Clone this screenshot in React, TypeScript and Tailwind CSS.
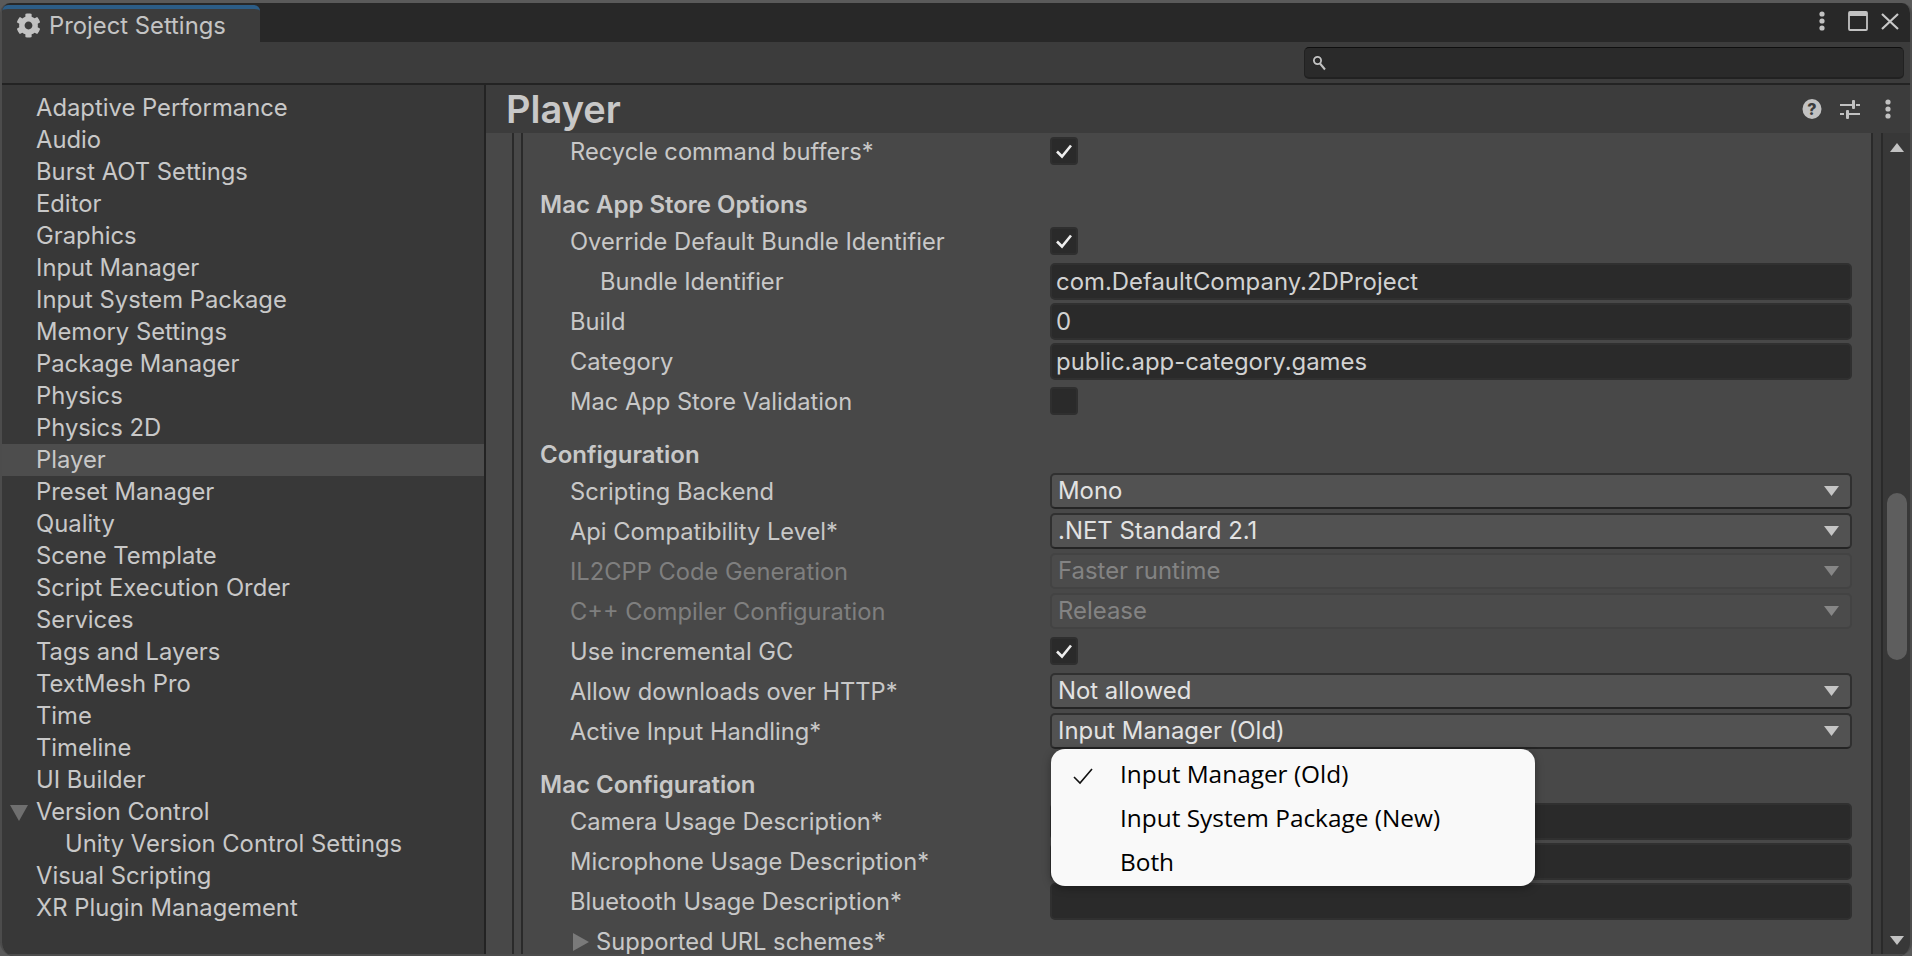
import { FaCog } from 'react-icons/fa';

const sidebarItems = [
  'Adaptive Performance',
  'Audio',
  'Burst AOT Settings',
  'Editor',
  'Graphics',
  'Input Manager',
  'Input System Package',
  'Memory Settings',
  'Package Manager',
  'Physics',
  'Physics 2D',
  'Player',
  'Preset Manager',
  'Quality',
  'Scene Template',
  'Script Execution Order',
  'Services',
  'Tags and Layers',
  'TextMesh Pro',
  'Time',
  'Timeline',
  'UI Builder',
  'Version Control',
  'Unity Version Control Settings',
  'Visual Scripting',
  'XR Plugin Management',
];

function Check() {
  return (
    <svg width="18" height="16" viewBox="0 0 18 16" fill="none">
      <path d="M2 8.5 L7 13.5 L16 2.5" stroke="#eeeeee" strokeWidth="2.6" />
    </svg>
  );
}

function Checkbox({ checked }: { checked?: boolean }) {
  return (
    <div className="-mt-[2px] flex h-[28px] w-[28px] items-center justify-center rounded-[4px] border-2 border-[#2f2f2f] bg-[#2a2a2a]">
      {checked && <Check />}
    </div>
  );
}

function Arrow({ disabled }: { disabled?: boolean }) {
  return (
    <svg width="15" height="10" viewBox="0 0 15 10" className="mr-[11px]">
      <path d="M0 0 H15 L7.5 10 Z" fill={disabled ? '#868686' : '#c4c4c4'} />
    </svg>
  );
}

function Row({ label, indent = 0, disabled, children }: { label: string; indent?: number; disabled?: boolean; children?: React.ReactNode }) {
  return (
    <div className="flex h-10 items-center">
      <div
        className={`w-[480px] shrink-0 text-[23.7px] ${indent === 1 ? 'pl-[30px]' : 'pl-0'} ${disabled ? 'text-[#7f7f7f]' : 'text-[#c8c8c8]'}`}
      >
        {label}
      </div>
      <div className="flex-1 text-[23.9px]">{children}</div>
    </div>
  );
}

function TextField({ value }: { value?: string }) {
  return (
    <div className="-mt-[2px] flex h-[37px] items-center rounded-[5px] border-2 border-[#303030] bg-[#2a2a2a] px-[4px] pt-[2px] text-[#d2d2d2]">
      {value}
    </div>
  );
}

function Select({ value, disabled }: { value: string; disabled?: boolean }) {
  return (
    <div
      className={`-mt-[2px] flex h-[36px] items-center justify-between rounded-[5px] border-2 pl-[6px] ${
        disabled
          ? 'border-[#434343] bg-[#4b4b4b] text-[#838383]'
          : 'border-[#303030] border-b-[#242424] bg-[#525252] text-[#e2e2e2]'
      }`}
    >
      <span>{value}</span>
      <Arrow disabled={disabled} />
    </div>
  );
}

function Header({ title }: { title: string }) {
  return <div className="mt-4 flex h-[34px] items-center text-[24px] font-semibold text-[#c8c8c8]">{title}</div>;
}

export default function App() {
  return (
    <div className="h-screen w-full overflow-hidden bg-[#5a5a5a] pt-[3px] font-['Inter',sans-serif] text-[23.8px]">
      <div className="relative flex h-full flex-col overflow-hidden rounded-t-[10px] rounded-b-[14px] border-x-2 border-[#4c4c4c]">
        {/* tab bar */}
        <div className="flex h-[39px] shrink-0 items-end bg-[#282828]">
          <div className="flex h-[37px] w-[258px] items-center gap-[8px] rounded-t-[6px] border-t-[4px] border-[#2c5d87] bg-[#3c3c3c] pl-[14px] text-[#c4c4c4]">
            <FaCog className="h-[25px] w-[25px] text-[#c2c2c2]" />
            <span>Project Settings</span>
          </div>
          <div className="ml-auto flex h-full items-center pb-[3px] pr-[11px]">
            <svg width="6" height="20" viewBox="0 0 6 20" fill="#c2c2c2">
              <circle cx="3" cy="3" r="2.6" />
              <circle cx="3" cy="10" r="2.6" />
              <circle cx="3" cy="17" r="2.6" />
            </svg>
            <svg width="20" height="20" viewBox="0 0 20 20" className="ml-[23px]">
              <rect x="1" y="1" width="18" height="18" fill="none" stroke="#c2c2c2" strokeWidth="1.8" rx="1" />
              <rect x="1" y="1" width="18" height="4" fill="#c2c2c2" />
            </svg>
            <svg width="18" height="17" viewBox="0 0 18 17" className="ml-[13px]">
              <path d="M1 1 L17 16 M17 1 L1 16" stroke="#c8c8c8" strokeWidth="2.2" />
            </svg>
          </div>
        </div>

        {/* search toolbar */}
        <div className="flex h-[43px] shrink-0 items-center justify-end border-b-2 border-[#232323] bg-[#3c3c3c] pr-[6px]">
          <div className="flex h-[32px] w-[600px] items-center rounded-[5px] border border-b-2 border-[#212121] border-t-[#0f0f0f] bg-[#2a2a2a] pl-[7px] pt-[2px]">
            <svg width="14" height="16" viewBox="0 0 14 16" fill="none" stroke="#c2c2c2">
              <circle cx="5.5" cy="5.5" r="3.6" strokeWidth="1.8" />
              <path d="M8 8.5 L13 14.5" strokeWidth="2" />
            </svg>
          </div>
        </div>

        <div className="flex min-h-0 flex-1">
          {/* sidebar */}
          <div className="w-[484px] shrink-0 border-r-2 border-[#232323] bg-[#383838] pt-[7px] text-[#c8c8c8]">
            {sidebarItems.map((item) => (
              <div
                key={item}
                className={`relative flex h-8 items-center ${item === 'Unity Version Control Settings' ? 'pl-[63px]' : 'pl-[34px]'} ${
                  item === 'Player' ? 'bg-[#4d4d4d]' : ''
                }`}
              >
                {item === 'Version Control' && (
                  <svg width="18" height="16" viewBox="0 0 18 16" className="absolute left-[8px] top-[9px]">
                    <path d="M0 0 H18 L9 16 Z" fill="#6f6f6f" />
                  </svg>
                )}
                {item}
              </div>
            ))}
          </div>

          {/* main */}
          <div className="relative flex min-w-0 flex-1 flex-col bg-[#3c3c3c]">
            <div className="flex h-[48px] shrink-0 items-center justify-between pl-[20px] pr-[19px]">
              <span className="text-[38px] font-semibold text-[#c8c8c8]">Player</span>
              <div className="flex items-center">
                <svg width="20" height="20" viewBox="0 0 20 20">
                  <ellipse cx="10" cy="10" rx="9.5" ry="10" fill="#c2c2c2" />
                  <text x="10" y="16" textAnchor="middle" fontSize="16" fontWeight="800" fill="#3c3c3c" fontFamily="Inter">?</text>
                </svg>
                <svg width="20" height="20" viewBox="0 0 20 20" fill="#c2c2c2" className="ml-[18px]">
                  <rect x="0" y="5" width="12" height="2" />
                  <rect x="12" y="1" width="3" height="9" rx="1" />
                  <rect x="16" y="5" width="4" height="2" />
                  <rect x="0" y="14" width="4" height="2" />
                  <rect x="6" y="11" width="3" height="9" rx="1" />
                  <rect x="9" y="14" width="11" height="2" />
                </svg>
                <svg width="6" height="20" viewBox="0 0 6 20" fill="#c2c2c2" className="ml-[25px]">
                  <circle cx="3" cy="3" r="2.6" />
                  <circle cx="3" cy="10" r="2.6" />
                  <circle cx="3" cy="17" r="2.6" />
                </svg>
              </div>
            </div>

            <div className="flex min-h-0 flex-1 bg-[#484848]">
              <div className="ml-[26px] min-w-0 flex-1 overflow-hidden border-l-2 border-[#2a2a2a]">
                <div className="ml-[7px] h-full border-l-2 border-[#2a2a2a] pl-[17px] pr-[11px]">
                  <div className="-mt-px">
                    <div className="pl-[30px]">
                      <Row label="Recycle command buffers*"><Checkbox checked /></Row>
                    </div>
                    <Header title="Mac App Store Options" />
                    <div className="pl-[30px]">
                      <Row label="Override Default Bundle Identifier"><Checkbox checked /></Row>
                      <Row label="Bundle Identifier" indent={1}><TextField value="com.DefaultCompany.2DProject" /></Row>
                      <Row label="Build"><TextField value="0" /></Row>
                      <Row label="Category"><TextField value="public.app-category.games" /></Row>
                      <Row label="Mac App Store Validation"><Checkbox /></Row>
                    </div>
                    <Header title="Configuration" />
                    <div className="pl-[30px]">
                      <Row label="Scripting Backend"><Select value="Mono" /></Row>
                      <Row label="Api Compatibility Level*"><Select value=".NET Standard 2.1" /></Row>
                      <Row label="IL2CPP Code Generation" disabled><Select value="Faster runtime" disabled /></Row>
                      <Row label="C++ Compiler Configuration" disabled><Select value="Release" disabled /></Row>
                      <Row label="Use incremental GC"><Checkbox checked /></Row>
                      <Row label="Allow downloads over HTTP*"><Select value="Not allowed" /></Row>
                      <Row label="Active Input Handling*"><Select value="Input Manager (Old)" /></Row>
                    </div>
                    <Header title="Mac Configuration" />
                    <div className="pl-[30px]">
                      <Row label="Camera Usage Description*"><TextField /></Row>
                      <Row label="Microphone Usage Description*"><TextField /></Row>
                      <Row label="Bluetooth Usage Description*"><TextField /></Row>
                      <div className="relative flex h-[35px] items-start pl-[26px] pt-[8px] text-[23.7px] leading-none text-[#c8c8c8]">
                        <svg width="16" height="18" viewBox="0 0 16 18" className="absolute left-[3px] top-[11px]">
                          <path d="M0 0 V18 L16 9 Z" fill="#7a7a7a" />
                        </svg>
                        Supported URL schemes*
                      </div>
                    </div>
                  </div>
                </div>
              </div>

              <div className="flex w-[47px] shrink-0">
                <div className="w-[8px] bg-[#484848]" />
                <div className="w-[2px] bg-[#2a2a2a]" />
                <div className="w-[8px] bg-[#3c3c3c]" />
                <div className="w-[2px] bg-[#2a2a2a]" />
                <div className="flex flex-1 flex-col items-center bg-[#383838] pb-[11px] pt-[10px]">
                  <svg width="14" height="9" viewBox="0 0 14 9">
                    <path d="M0 9 L7 0 L14 9 Z" fill="#c2c2c2" />
                  </svg>
                  <div className="mt-[341px] h-[167px] w-[20px] rounded-full bg-[#5e5e5e]" />
                  <svg width="14" height="9" viewBox="0 0 14 9" className="mt-auto">
                    <path d="M0 0 H14 L7 9 Z" fill="#c2c2c2" />
                  </svg>
                </div>
              </div>
            </div>

            {/* dropdown popup */}
            <div className="absolute left-[565px] top-[664px] flex h-[137px] w-[484px] flex-col justify-center rounded-[14px] bg-[#f9f9f9] pt-[2px] font-['Open_Sans',sans-serif] text-[24.4px] text-black shadow-[0_2px_8px_rgba(0,0,0,0.35)]">
              <div className="relative flex h-[44px] items-center pl-[69px]">
                <svg width="20" height="17" viewBox="0 0 20 17" fill="none" className="absolute left-[22px] top-[15px]">
                  <path d="M1 9 L7 15 L19 1" stroke="#111111" strokeWidth="1.6" />
                </svg>
                Input Manager (Old)
              </div>
              <div className="flex h-[44px] items-center pl-[69px]">Input System Package (New)</div>
              <div className="flex h-[44px] items-center pl-[69px]">Both</div>
            </div>
          </div>
        </div>

        {/* bottom edge of the window */}
        <div className="absolute inset-x-0 bottom-0 h-[2px] bg-[#4c4c4c]" />
      </div>
    </div>
  );
}
